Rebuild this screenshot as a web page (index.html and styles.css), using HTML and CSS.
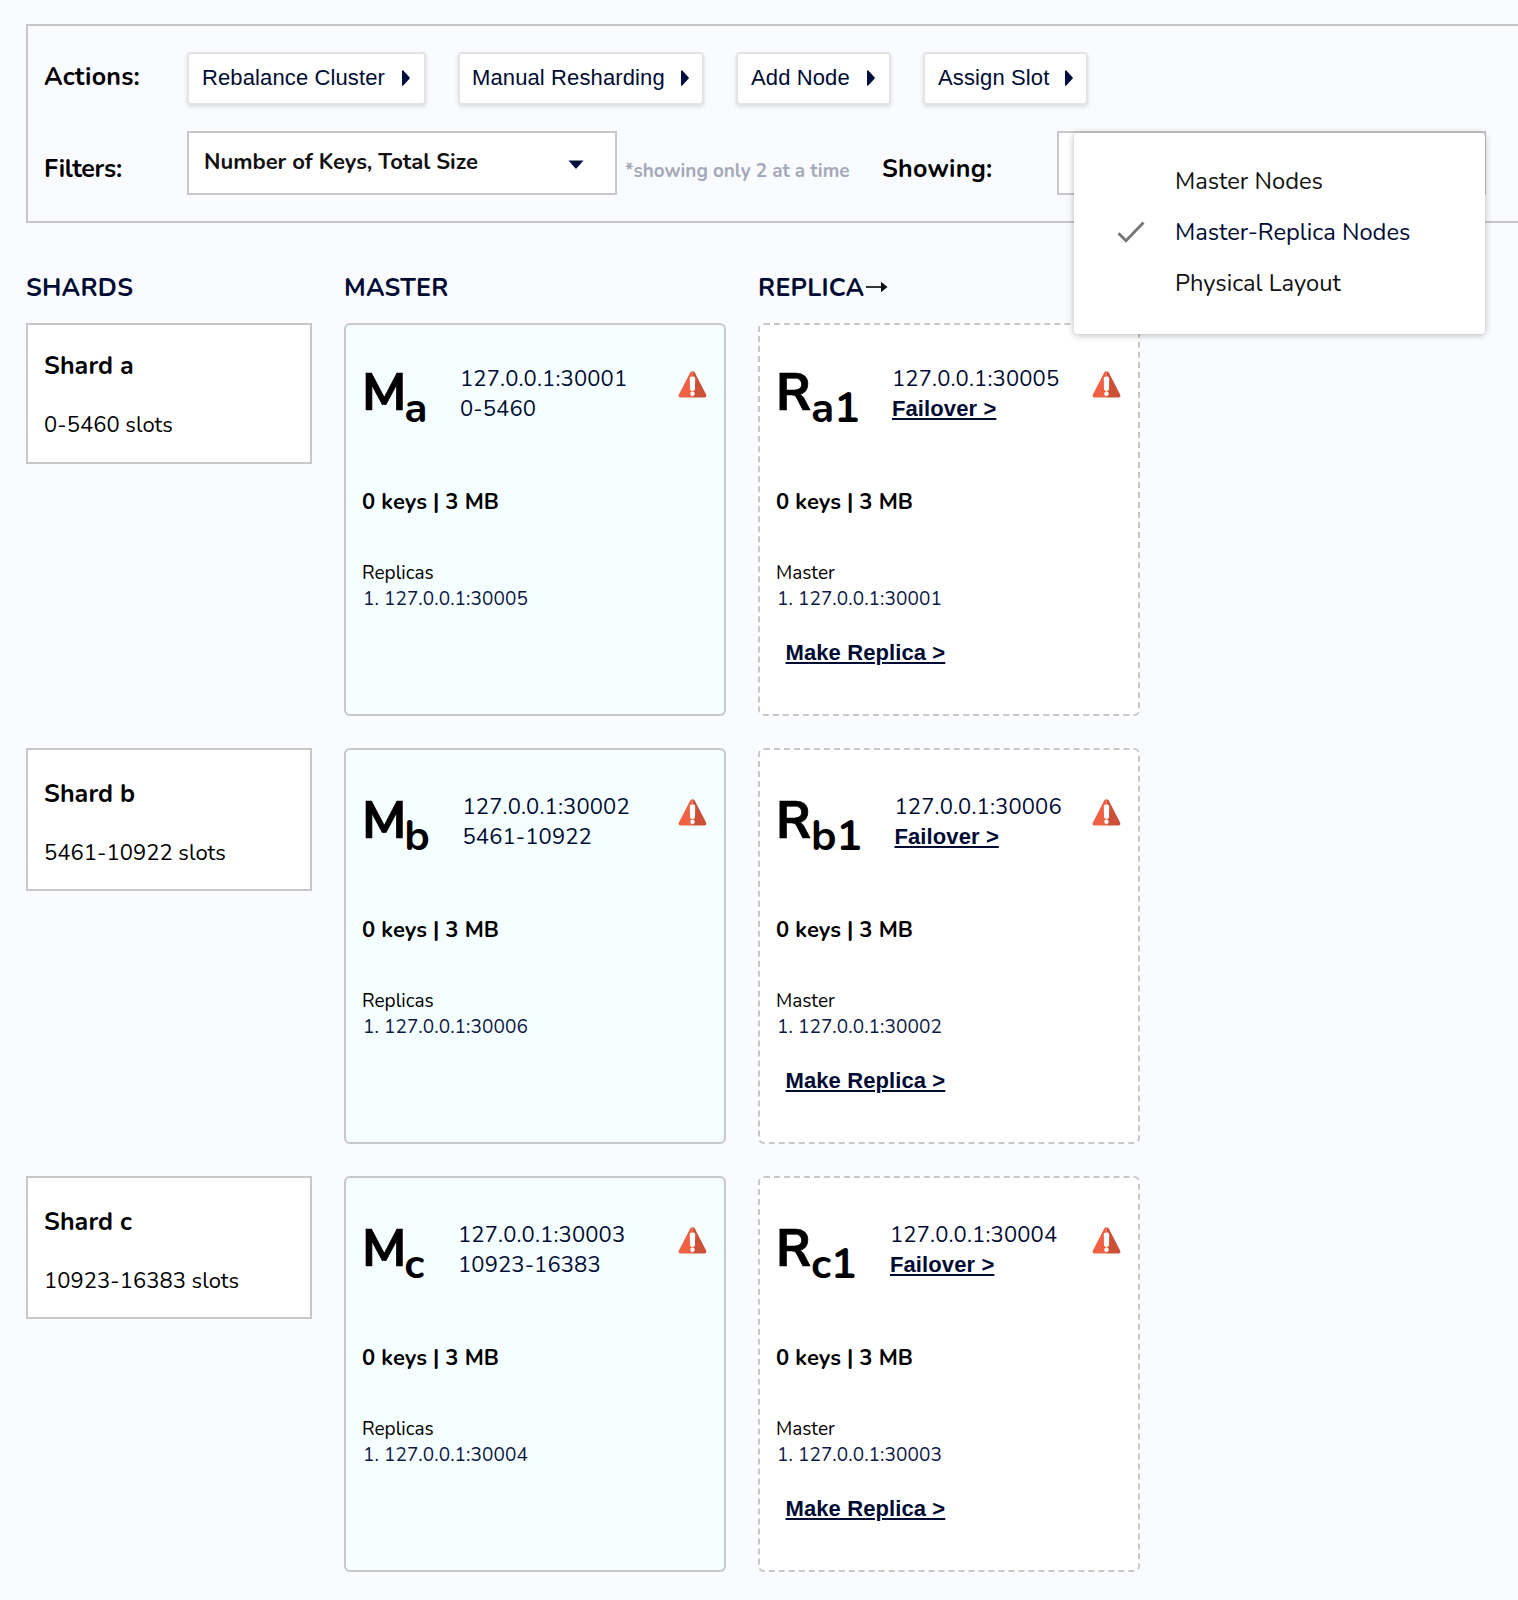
FILE: index.html
```html
<!DOCTYPE html>
<html lang="en">
<head>
<meta charset="utf-8">
<title>Cluster Management</title>
<link rel="stylesheet" href="styles.css">
</head>
<body>
<svg class="defs" width="0" height="0" aria-hidden="true">
  <symbol id="warning" viewBox="0 0 28 27">
    <path d="M14 .3c1 0 1.800.5 2.400 1.500L27.600 23.600c.8 1.700 0 3-1.900 3H14z" fill="#cb5139"/>
    <path d="M14 .3c-1 0-1.800.5-2.400 1.500L.4 23.600c-.8 1.700 0 3 1.900 3H14z" fill="#f06042"/>
    <path d="M11.300 7.500a2 2 0 0 1 2-2h1.400a2 2 0 0 1 2 2l-.2 10a2.300 2.300 0 0 1-5 0z" fill="#fff"/>
    <circle cx="14" cy="22.700" r="2.200" fill="#fff"/>
  </symbol>
  <symbol id="play" viewBox="0 0 8 16">
    <path d="M0 1.200C0 .2.700 0 1.300.6L7.500 7.200c.5.500.5 1.100 0 1.600l-6.200 6.600C.7 16 0 15.800 0 14.800z" fill="#00103c"/>
  </symbol>
</svg>

<section class="controls">
  <div class="controls-row">
    <h2 class="label label-actions">Actions:</h2>
    <div class="buttons">
      <button class="btn btn-rebalance">Rebalance Cluster<svg class="play"><use href="#play"/></svg></button>
      <button class="btn btn-reshard">Manual Resharding<svg class="play"><use href="#play"/></svg></button>
      <button class="btn btn-add">Add Node<svg class="play"><use href="#play"/></svg></button>
      <button class="btn btn-assign">Assign Slot<svg class="play"><use href="#play"/></svg></button>
    </div>
  </div>
  <div class="controls-row filters">
    <h2 class="label label-filters">Filters:</h2>
    <div class="select">
      <span>Number of Keys, Total Size</span>
      <svg class="caret" viewBox="0 0 16 9"><path d="M.5.500h15L8.900 8Q8 9 7.100 8z" fill="#00103c"/></svg>
    </div>
    <span class="note">*showing only 2 at a time</span>
    <h2 class="label label-showing">Showing:</h2>
    <div class="select select-showing">
      <ul class="menu">
        <li class="option">Master Nodes</li>
        <li class="option selected"><svg class="check" viewBox="0 0 28 22"><path d="M1.500 12.200l7.500 7.600L26.500 1.500" fill="none" stroke="#757575" stroke-width="2.800"/></svg>Master-Replica Nodes</li>
        <li class="option">Physical Layout</li>
      </ul>
    </div>
  </div>
</section>

<main class="board">
  <div class="row headings">
    <h3>SHARDS</h3>
    <h3>MASTER</h3>
    <h3>REPLICA<svg class="arrow" viewBox="0 0 22 12"><path d="M0 6h17" stroke="#111" stroke-width="1.700"/><path d="M15 .8L21.500 6 15 11.200z" fill="#111"/></svg></h3>
  </div>

  <div class="row shard-a">
    <div class="shard"><h4>Shard a</h4><p>0-5460 slots</p></div>
    <article class="card master">
      <header><div class="id"><span>M</span><sub>a</sub></div>
        <div class="addr"><p>127.0.0.1:30001</p><p>0-5460</p></div>
        <svg class="warn"><use href="#warning"/></svg></header>
      <p class="stats">0 keys | 3 MB</p>
      <div class="peers"><p>Replicas</p><p class="peer">1. 127.0.0.1:30005</p></div>
    </article>
    <article class="card replica">
      <header><div class="id"><span>R</span><sub>a1</sub></div>
        <div class="addr"><p>127.0.0.1:30005</p><p><a class="link">Failover &gt;</a></p></div>
        <svg class="warn"><use href="#warning"/></svg></header>
      <p class="stats">0 keys | 3 MB</p>
      <div class="peers"><p>Master</p><p class="peer">1. 127.0.0.1:30001</p></div>
      <a class="link make">Make Replica &gt;</a>
    </article>
  </div>

  <div class="row shard-b">
    <div class="shard"><h4>Shard b</h4><p>5461-10922 slots</p></div>
    <article class="card master">
      <header><div class="id"><span>M</span><sub>b</sub></div>
        <div class="addr"><p>127.0.0.1:30002</p><p>5461-10922</p></div>
        <svg class="warn"><use href="#warning"/></svg></header>
      <p class="stats">0 keys | 3 MB</p>
      <div class="peers"><p>Replicas</p><p class="peer">1. 127.0.0.1:30006</p></div>
    </article>
    <article class="card replica">
      <header><div class="id"><span>R</span><sub>b1</sub></div>
        <div class="addr"><p>127.0.0.1:30006</p><p><a class="link">Failover &gt;</a></p></div>
        <svg class="warn"><use href="#warning"/></svg></header>
      <p class="stats">0 keys | 3 MB</p>
      <div class="peers"><p>Master</p><p class="peer">1. 127.0.0.1:30002</p></div>
      <a class="link make">Make Replica &gt;</a>
    </article>
  </div>

  <div class="row shard-c">
    <div class="shard"><h4>Shard c</h4><p>10923-16383 slots</p></div>
    <article class="card master">
      <header><div class="id"><span>M</span><sub>c</sub></div>
        <div class="addr"><p>127.0.0.1:30003</p><p>10923-16383</p></div>
        <svg class="warn"><use href="#warning"/></svg></header>
      <p class="stats">0 keys | 3 MB</p>
      <div class="peers"><p>Replicas</p><p class="peer">1. 127.0.0.1:30004</p></div>
    </article>
    <article class="card replica">
      <header><div class="id"><span>R</span><sub>c1</sub></div>
        <div class="addr"><p>127.0.0.1:30004</p><p><a class="link">Failover &gt;</a></p></div>
        <svg class="warn"><use href="#warning"/></svg></header>
      <p class="stats">0 keys | 3 MB</p>
      <div class="peers"><p>Master</p><p class="peer">1. 127.0.0.1:30003</p></div>
      <a class="link make">Make Replica &gt;</a>
    </article>
  </div>
</main>
</body>
</html>
```

FILE: styles.css
```css
* { box-sizing: border-box; }

html { overflow: hidden; }

body {
  margin: 0;
  padding: 24px 0 0 26px;
  height: 1600px;
  overflow: hidden;
  background: #fafbff;
  color: #000;
  font-family: Nunito, Lato, sans-serif;
  font-size: 22px;
  line-height: 30px;
}

h2, h3, h4, p, ul { margin: 0; padding: 0; }
svg { display: block; flex: none; }
.defs { position: absolute; }

/* Controls panel */
.controls {
  width: 1540px;
  height: 199px;
  padding: 26px 0 0 16px;
  border: 2px solid #c8c8c8;
}
.controls-row { display: flex; align-items: flex-start; }
.filters { margin-top: 26px; }

.label { flex: none; font-size: 25px; font-weight: 700; }
.label-actions { width: 143px; margin-top: 10px; letter-spacing: .25px; }
.label-filters { width: 143px; margin-top: 23px; letter-spacing: -.3px; }
.label-showing { width: 175px; margin-top: 23px; letter-spacing: .3px; }

.buttons { display: flex; gap: 32px; }
.btn {
  display: flex;
  align-items: center;
  justify-content: space-between;
  height: 53px;
  padding: 0 14px 2px 13px;
  border: 2px solid #e4e4e4;
  border-radius: 4px;
  background: #fff;
  box-shadow: 0 2px 4px rgba(0, 0, 0, .12);
  color: #000b33;
  font: 22px "Liberation Sans", Arial, sans-serif;
  letter-spacing: .12px;
  white-space: nowrap;
}
.btn-rebalance { width: 239px; }
.btn-reshard { width: 246px; padding: 0 13px 2px 12px; }
.btn-add { width: 155px; }
.btn-assign { width: 165px; padding-right: 13px; }
.play { width: 8px; height: 16px; }

.select {
  position: relative;
  display: flex;
  align-items: flex-start;
  justify-content: space-between;
  width: 430px;
  height: 64px;
  padding: 14px 31px 0 15px;
  border: 2px solid #c8c8c8;
  background: #fff;
  color: #111;
  font-weight: 700;
}
.select-showing { width: 429px; }
.caret { width: 16px; height: 9px; margin-top: 13px; }

.note {
  width: 257px;
  margin: 25px 0 0 8px;
  color: #a3a9b8;
  font-size: 18.9px;
  font-weight: 700;
}

.menu {
  position: absolute;
  top: 0;
  left: 15px;
  z-index: 2;
  width: 411px;
  height: 201px;
  padding-top: 23px;
  border-radius: 4px;
  background: #fff;
  box-shadow: 0 1px 7px rgba(0, 0, 0, .28);
  font-size: 23.7px;
  font-weight: 400;
  list-style: none;
}
.option {
  display: flex;
  align-items: center;
  height: 50.8px;
  padding-left: 101px;
}
.option.selected { padding-left: 43px; color: #000b33; }
.check { width: 28px; height: 22px; margin-right: 30px; }

/* Board */
.board {
  display: flex;
  flex-direction: column;
  gap: 32px;
  padding-top: 50px;
}
.row {
  display: grid;
  grid-template-columns: 286px 382px 382px;
  gap: 32px;
  align-items: start;
}
.headings { margin-bottom: -12px; }
.headings h3 {
  display: flex;
  align-items: center;
  height: 30px;
  color: #000b33;
  font-size: 25px;
  font-weight: 700;
  letter-spacing: .25px;
}
.arrow { width: 22px; height: 12px; margin: 0 0 2px 2px; }

.shard {
  height: 143px;
  padding: 29px 16px 0;
  border: 2px solid #c8c8c8;
  background: #fff;
}
.shard h4 { font-size: 25px; font-weight: 700; letter-spacing: .1px; }
.shard p { margin-top: 29px; letter-spacing: .05px; }

.card {
  height: 396px;
  padding: 38px 16px 0;
  border: 2px solid #c8c8c8;
  border-radius: 6px;
  background: #fff;
}
.card.master { background: #f6ffff; --id-width: 98px; }
.card.replica { border-style: dashed; --id-width: 116px; }

.shard-a .shard { height: 141px; padding-top: 26px; }
.shard-a .card { height: 393px; padding-top: 35px; }
.shard-b { --id-shift: 2.5px; }
.shard-c { --id-shift: -2px; }

.card header { display: flex; height: 90px; }
.id {
  flex: none;
  width: calc(var(--id-width) + var(--id-shift, 0px));
  padding-top: 3px;
  font-size: 51px;
  font-weight: 700;
  line-height: 60px;
  white-space: nowrap;
}
.id span { font-family: "Nunito Sans", Nunito, Lato, sans-serif; -webkit-text-stroke: .7px #000; }
.id sub {
  font-size: 42.500px;
  line-height: 0;
  vertical-align: -12px;
}
.master .id sub { margin-left: -2px; }
.addr { padding-top: 4px; color: #000b33; letter-spacing: .13px; }
.warn { width: 29px; height: 27px; margin: 11px 1px 0 auto; }

.stats { margin-top: 37px; font-weight: 700; letter-spacing: .06px; }
.peers { margin-top: 43px; font-size: 19px; line-height: 26px; }
.peer { padding-left: 1px; color: #0b1745; letter-spacing: .09px; }

.link {
  color: #000b33;
  font-family: "Liberation Sans", Arial, sans-serif;
  font-weight: 700;
  letter-spacing: .1px;
  text-decoration: underline;
  text-decoration-thickness: 2px;
  text-underline-offset: 2px;
}
.make { display: block; margin: 26px 0 0 9.5px; }
```
